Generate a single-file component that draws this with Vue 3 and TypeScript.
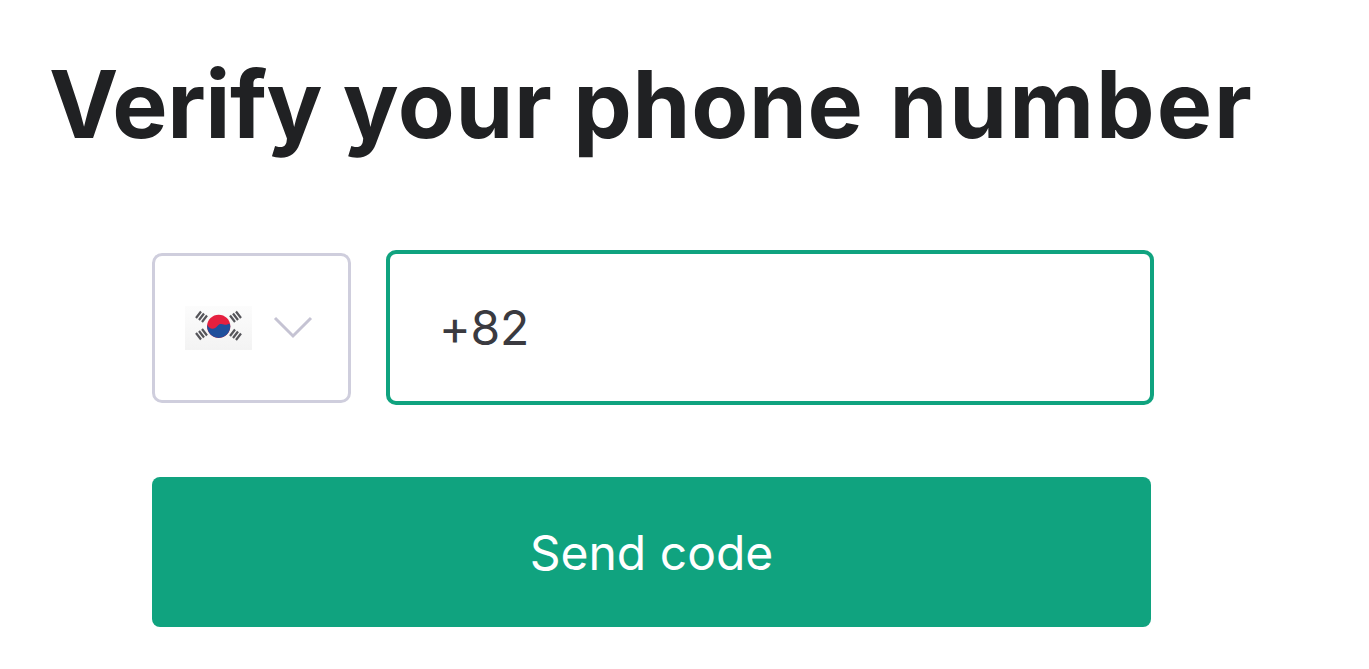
<script setup lang="ts">
</script>

<template>
  <main class="page">
    <h1 class="title"><span class="word-first">Verify</span> your phone <span class="word-last">number</span></h1>
    <form class="form" @submit.prevent>
      <div class="phone-row">
        <button type="button" class="country">
          <svg class="flag" viewBox="0 0 67 44" aria-hidden="true">
            <defs>
              <linearGradient id="flagBg" x1="0" y1="0" x2="0" y2="1">
                <stop offset="0" stop-color="#fcfcfc" />
                <stop offset="1" stop-color="#f3f3f3" />
              </linearGradient>
            </defs>
            <rect width="67" height="44" fill="url(#flagBg)" />
            <g stroke="#55555a" stroke-width="2.200">
              <path d="M11 12l5-6.500M14 14l5-6.500M17 16l5-6.500" />
              <path d="M45 9.500l5 6.500M48 7.500l5 6.500M51 5.500l5 6.500" />
              <path d="M11 27l5 6.500M14 25l5 6.500M17 23l5 6.500" />
              <path d="M45 30l5-6.500M48 32l5-6.500M51 34l5-6.500" />
            </g>
            <circle cx="33.700" cy="20.300" r="11.600" fill="#e5203f" />
            <path d="M22.200 18.500c1 3.500 5 5.500 8 3.500s3-4 6-4 4 1.500 6 .5 2.700-1.500 3.100 1.800c0 6.400-5.200 11.600-11.600 11.600s-11.600-5.200-11.600-11.600z" fill="#1f4f9c" />
          </svg>
          <svg class="chevron" viewBox="0 0 40 24" aria-hidden="true">
            <path d="M2 3l18 18L38 3" fill="none" stroke="#c5c3d3" stroke-width="3" />
          </svg>
        </button>
        <div class="phone-input">+82</div>
      </div>
      <button type="submit" class="send">Send code</button>
    </form>
  </main>
</template>

<style scoped>
.page {
  width: 1369px;
  height: 669px;
  box-sizing: border-box;
  padding: 48px 0 0 49px;
  background: #fff;
  font-family: Inter, "Liberation Sans", sans-serif;
  overflow: hidden;
}
.title {
  margin: 0;
  font-size: 93px;
  line-height: 112px;
  font-weight: 700;
  letter-spacing: 0.7px;
  word-spacing: -2px;
  color: #202123;
  white-space: nowrap;
}
.word-first {
  letter-spacing: -0.5px;
}
.word-last {
  margin-left: 5px;
  letter-spacing: 2px;
}
.form {
  width: 1002px;
  margin: 90px 0 0 103px;
}
.phone-row {
  display: flex;
  align-items: center;
  gap: 35px;
}
.country {
  width: 199px;
  height: 150px;
  box-sizing: border-box;
  display: flex;
  align-items: center;
  gap: 21px;
  padding: 0 0 0 30px;
  background: #fff;
  border: 3px solid #cfcedd;
  border-radius: 10px;
}
.flag {
  width: 67px;
  height: 44px;
  flex: none;
  filter: blur(0.6px);
}
.chevron {
  width: 40px;
  height: 24px;
  flex: none;
  margin-top: -2px;
}
.phone-input {
  width: 768px;
  height: 155px;
  box-sizing: border-box;
  display: flex;
  align-items: center;
  padding: 0 0 0 49px;
  border: 4px solid #10a37f;
  border-radius: 10px;
  font-size: 48px;
  letter-spacing: -0.2px;
  color: #3a3a40;
}
.send {
  display: block;
  width: 999px;
  height: 150px;
  margin-top: 72px;
  background: #10a37f;
  border: 0;
  border-radius: 8px;
  color: #fff;
  font-family: inherit;
  font-size: 48px;
  font-weight: 400;
}
</style>
